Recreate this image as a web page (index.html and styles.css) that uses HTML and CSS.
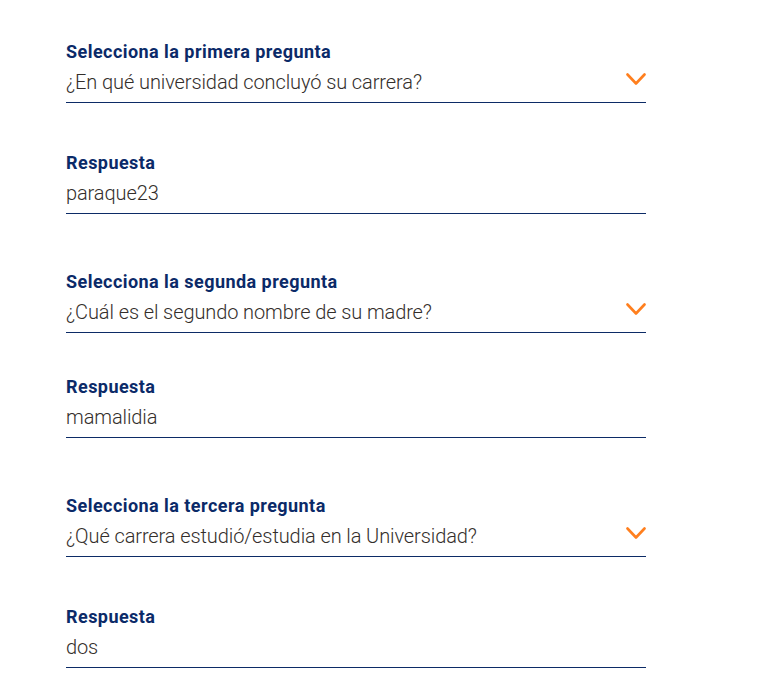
FILE: index.html
```html
<!DOCTYPE html>
<html lang="es">
<head>
<meta charset="utf-8">
<title>Preguntas de seguridad</title>
<link rel="stylesheet" href="styles.css">
</head>
<body>
<form class="form">
  <div class="field field--select">
    <div class="label">Selecciona la primera pregunta</div>
    <div class="value">¿En qué universidad concluyó su carrera?
      <svg class="chevron" width="20" height="13" viewBox="0 0 20 13"><path d="M1.5 1.5 L10 10.5 L18.5 1.5" fill="none" stroke="#ff7f1e" stroke-width="2.6" stroke-linecap="round" stroke-linejoin="round"/></svg>
    </div>
  </div>
  <div class="field field--answer">
    <div class="label">Respuesta</div>
    <div class="value">paraque23</div>
  </div>

  <div class="field field--select group-start">
    <div class="label">Selecciona la segunda pregunta</div>
    <div class="value">¿Cuál es el segundo nombre de su madre?
      <svg class="chevron" width="20" height="13" viewBox="0 0 20 13"><path d="M1.5 1.5 L10 10.5 L18.5 1.5" fill="none" stroke="#ff7f1e" stroke-width="2.6" stroke-linecap="round" stroke-linejoin="round"/></svg>
    </div>
  </div>
  <div class="field field--answer answer-tight">
    <div class="label">Respuesta</div>
    <div class="value">mamalidia</div>
  </div>

  <div class="field field--select group-start">
    <div class="label">Selecciona la tercera pregunta</div>
    <div class="value">¿Qué carrera estudió/estudia en la Universidad?
      <svg class="chevron" width="20" height="13" viewBox="0 0 20 13"><path d="M1.5 1.5 L10 10.5 L18.5 1.5" fill="none" stroke="#ff7f1e" stroke-width="2.6" stroke-linecap="round" stroke-linejoin="round"/></svg>
    </div>
  </div>
  <div class="field field--answer">
    <div class="label">Respuesta</div>
    <div class="value">dos</div>
  </div>
</form>
</body>
</html>
```

FILE: styles.css
```css
html, body {
  margin: 0;
  padding: 0;
  background: #ffffff;
}

.form {
  width: 580px;
  padding: 40px 0 0 66px;
  font-family: Roboto, "Liberation Sans", sans-serif;
}

.field {
  border-bottom: 1px solid #0c2b66;
}

.field--answer {
  margin-top: 48px;
}

.answer-tight {
  margin-top: 42px;
}

.group-start {
  margin-top: 56px;
}

.label {
  font-size: 18px;
  line-height: 22px;
  font-weight: 700;
  letter-spacing: 0.45px;
  color: #0b2a68;
  padding-top: 1px;
  margin-bottom: 5px;
}

.value {
  display: flex;
  align-items: center;
  justify-content: space-between;
  font-size: 20px;
  line-height: 28px;
  font-weight: 300;
  letter-spacing: -0.1px;
  color: #332e2b;
  padding-bottom: 6px;
}

.chevron {
  display: block;
  margin-top: -5px;
}
```
